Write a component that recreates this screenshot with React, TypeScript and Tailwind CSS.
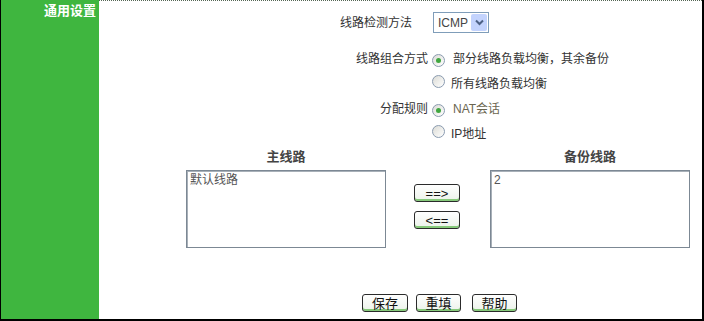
import React from 'react';

const Radio: React.FC<{ checked?: boolean }> = ({ checked }) => (
  <span className="relative inline-flex h-[13px] w-[13px] items-center justify-center rounded-full border border-[#8a9bb0] bg-gradient-to-br from-[#dcdcd6] to-white">
    {checked && <span className="h-[5px] w-[5px] rounded-full bg-[#3fa63f]" />}
  </span>
);

const Btn: React.FC<{ label: string; className?: string }> = ({ label, className = '' }) => (
  <button
    type="button"
    className={`flex h-[18px] items-center justify-center rounded-[3px] border border-[#2b2b2b] bg-gradient-to-b from-white to-[#ecf2ea] text-[13px] leading-none text-[#111] shadow-[inset_0_-2px_0_#86c97a] ${className}`}
  >
    {label}
  </button>
);

const ListBox: React.FC<{ text: string }> = ({ text }) => (
  <div className="h-[78px] w-[200px] border border-[#7c8894] bg-white px-[3px] pt-[2px] text-[12px] leading-[15px] text-[#555] shadow-[inset_1px_1px_0_#a8b0b8]">
    {text}
  </div>
);

export default function App() {
  return (
    <div className="flex h-[321px] w-[704px] border-b-2 border-l border-r-2 border-black bg-white font-['Liberation_Sans','Noto_Sans_CJK_SC',sans-serif] text-[12px] text-[#333]">
      <div className="w-[98px] bg-[#3fb63f] pr-[3px] pt-[3px] text-right text-[13px] font-bold leading-[16px] text-white">
        通用设置
      </div>
      <div className="flex flex-1 flex-col border-t border-dotted border-[#556655]">
        <div className="flex h-[21px] mt-[11px] items-center">
          <div className="w-[329px] pr-[16px] text-right">线路检测方法</div>
          <div className="ml-[5px] flex h-[21px] w-[56px] items-center border border-[#7f9db9] bg-white pl-[4px]">
            <span className="flex-1 text-[12px] text-[#444]">ICMP</span>
            <span className="mr-[1px] flex h-[17px] w-[16px] items-center justify-center rounded-[2px] bg-[#c3d3fd]">
              <svg width="9" height="7" viewBox="0 0 9 7">
                <path d="M1 1.5 L4.5 5 L8 1.5" fill="none" stroke="#4d6185" strokeWidth="2" />
              </svg>
            </span>
          </div>
        </div>

        <div className="mt-[13px] flex flex-col">
          <div className="flex h-[25px] items-center">
            <div className="w-[329px] text-right">线路组合方式</div>
            <div className="ml-[4px]"><Radio checked /></div>
            <span className="ml-[8px]">部分线路负载均衡，其余备份</span>
          </div>
          <div className="flex h-[25px] items-center">
            <div className="w-[329px]" />
            <div className="ml-[4px]"><Radio /></div>
            <span className="ml-[6px]">所有线路负载均衡</span>
          </div>
          <div className="flex h-[25px] items-center">
            <div className="w-[329px] text-right">分配规则</div>
            <div className="ml-[4px]"><Radio checked /></div>
            <span className="ml-[8px] text-[#6b6650]">NAT会话</span>
          </div>
          <div className="flex h-[25px] items-center">
            <div className="w-[329px]" />
            <div className="ml-[4px]"><Radio /></div>
            <span className="ml-[6px]">IP地址</span>
          </div>
        </div>

        <div className="mt-[3px] flex pl-[87px]">
          <div className="flex w-[200px] flex-col items-center">
            <div className="h-[15px] text-[13px] font-bold leading-[15px] text-[#444]">主线路</div>
            <div className="mt-[6px]"><ListBox text="默认线路" /></div>
          </div>
          <div className="ml-[28px] mt-[35px] flex flex-col gap-[9px]">
            <Btn label="==>" className="w-[46px] text-[12px]" />
            <Btn label="<==" className="w-[46px] text-[12px]" />
          </div>
          <div className="ml-[30px] flex w-[200px] flex-col items-center">
            <div className="h-[15px] text-[13px] font-bold leading-[15px] text-[#444]">备份线路</div>
            <div className="mt-[6px]"><ListBox text="2" /></div>
          </div>
        </div>

        <div className="mt-[46px] flex pl-[263px]">
          <Btn label="保存" className="w-[46px]" />
          <Btn label="重填" className="ml-[8px] w-[45px]" />
          <Btn label="帮助" className="ml-[11px] w-[45px]" />
        </div>
      </div>
    </div>
  );
}
